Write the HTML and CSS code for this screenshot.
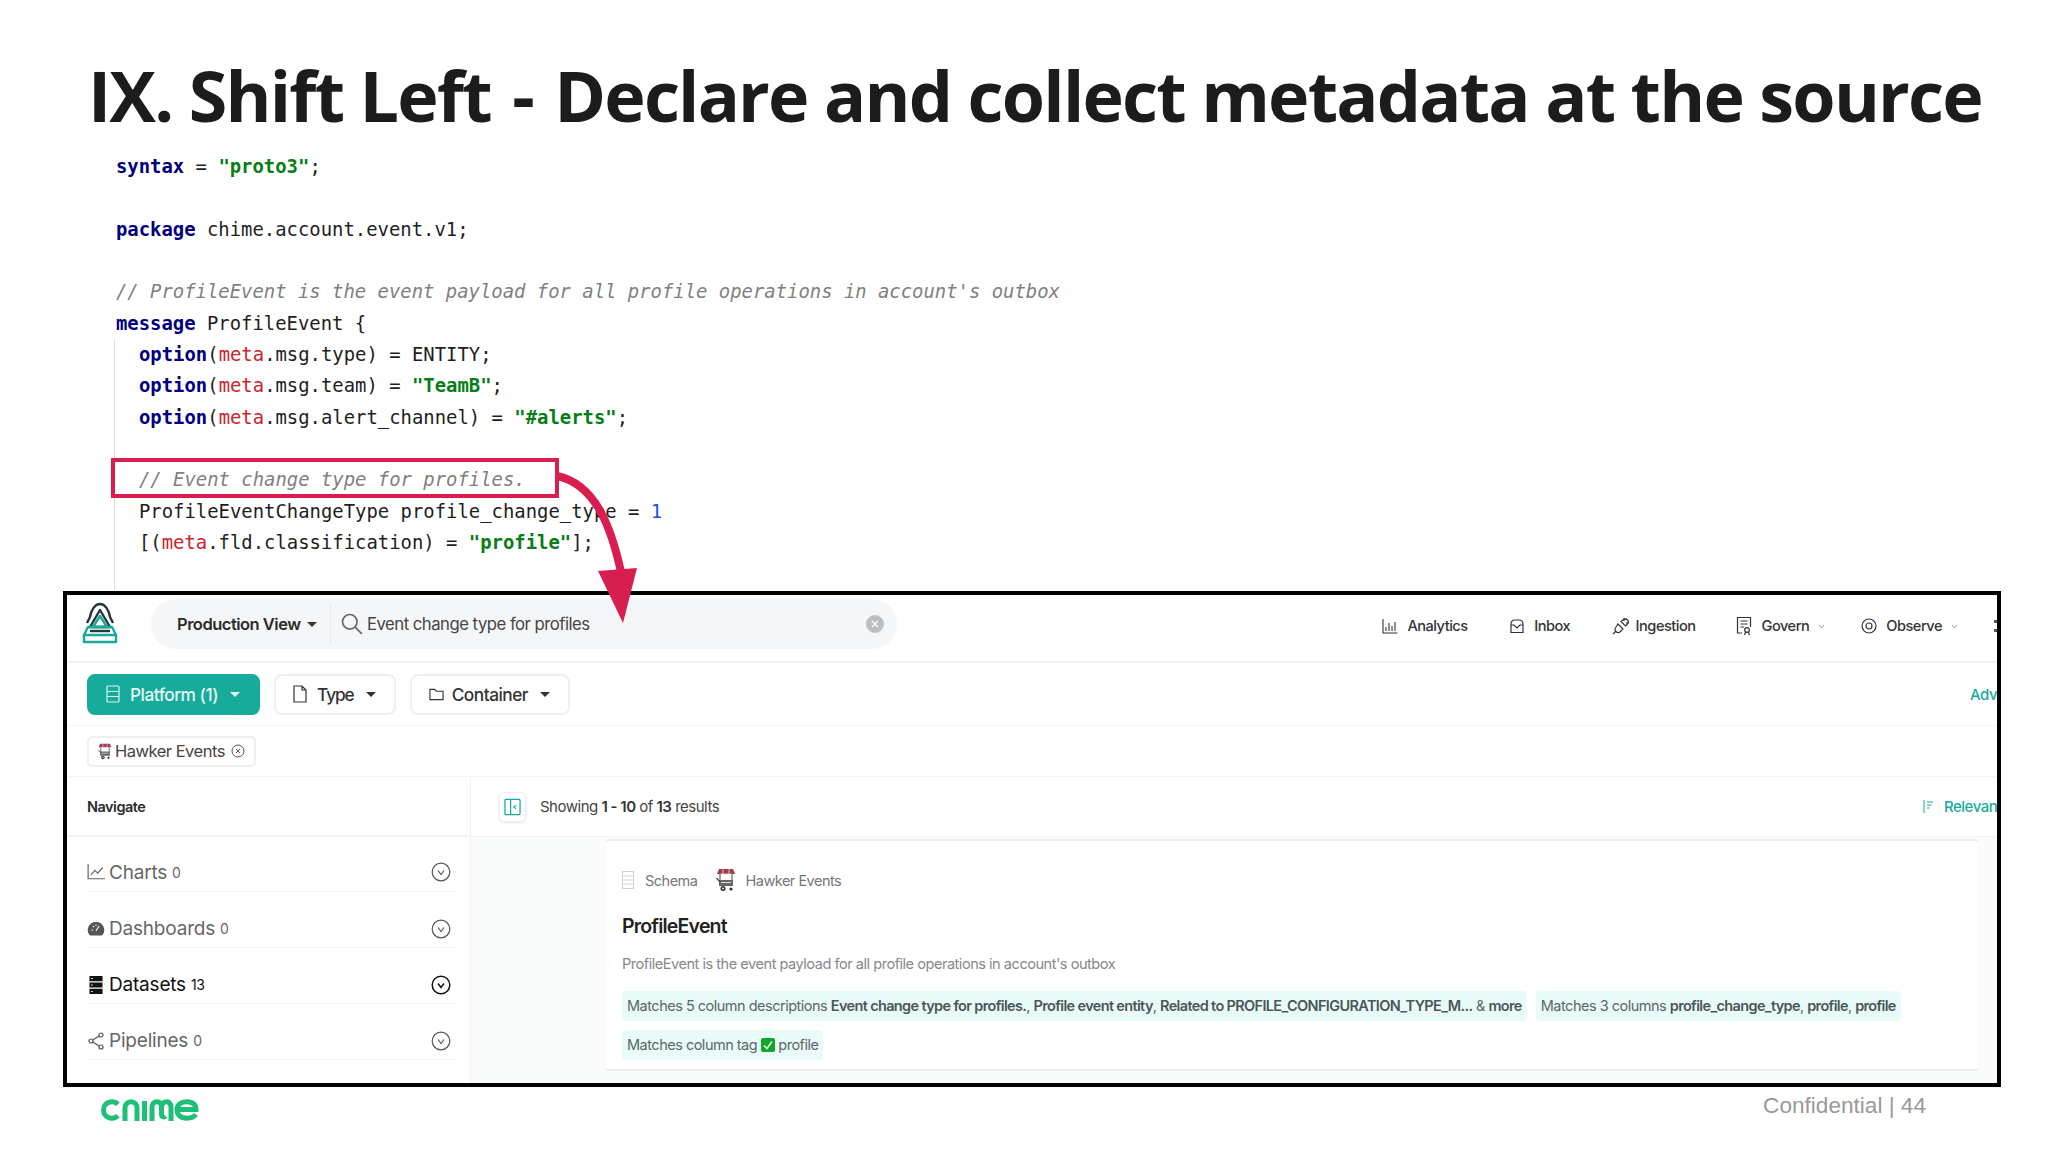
FILE: index.html
```html
<!DOCTYPE html>
<html lang="en">
<head>
<meta charset="utf-8">
<title>Shift Left</title>
<link rel="stylesheet" href="styles.css">
</head>
<body>
<div class="slide">
  <h1 class="title">IX. Shift Left <span class="dash">-</span> Declare and collect metadata at the source</h1>
  <div class="code">
    <div class="line"><span class="kw">syntax</span> = <span class="str">"proto3"</span>;</div>
    <div class="line"></div>
    <div class="line"><span class="kw">package</span> chime.account.event.v1;</div>
    <div class="line"></div>
    <div class="line"><span class="com">// ProfileEvent is the event payload for all profile operations in account's outbox</span></div>
    <div class="line"><span class="kw">message</span> ProfileEvent {</div>
    <div class="codebody">
      <div class="line"><span class="kw">option</span>(<span class="meta">meta</span>.msg.type) = ENTITY;</div>
      <div class="line"><span class="kw">option</span>(<span class="meta">meta</span>.msg.team) = <span class="str">"TeamB"</span>;</div>
      <div class="line"><span class="kw">option</span>(<span class="meta">meta</span>.msg.alert_channel) = <span class="str">"#alerts"</span>;</div>
      <div class="line"></div>
      <div class="line"><span class="com">// Event change type for profiles.</span></div>
      <div class="line">ProfileEventChangeType profile_change_type = <span class="num">1</span></div>
      <div class="line">[(<span class="meta">meta</span>.fld.classification) = <span class="str">"profile"</span>];</div>
    </div>
  </div>
  <div class="screen">
    <div class="topbar">
      <svg class="logo" viewBox="0 0 36 42" fill="none" stroke-width="2.4" stroke-linejoin="round">
        <path d="M18 2 C13 2 9 8 8 15 L5 21 M18 2 C23 2 27 8 28 15 L31 21" stroke="#24383c"/>
        <path d="M18 8 L8 25 L28 25 Z" stroke="#24383c"/>
        <path d="M18 14 L11 25 L25 25 Z" stroke="#17a99a"/>
        <path d="M6 25 H30 L34 33 H2 Z M2 33 V40 H34 V33" stroke="#17a99a"/>
        <path d="M8 29 H28" stroke="#24383c"/>
      </svg>
      <div class="searchpill">
        <span class="viewname">Production View</span>
        <span class="caret"></span>
        <span class="pilldiv"></span>
        <svg class="searchic" viewBox="0 0 20 20" fill="none" stroke="#5f6b70" stroke-width="1.5"><circle cx="8" cy="8" r="6.6"/><path d="M12.8 12.8 L19 19"/></svg>
        <span class="query">Event change type for profiles</span>
        <svg class="clear" viewBox="0 0 18 18"><circle cx="9" cy="9" r="9" fill="#b9bfc2"/><path d="M6 6 L12 12 M12 6 L6 12" stroke="#f5f6f7" stroke-width="1.5"/></svg>
      </div>
      <nav class="nav">
        <span class="navitem"><svg class="ni" viewBox="0 0 16 16" fill="none" stroke="#333" stroke-width="1.1"><path d="M1 1 V15 H15.5 M4 13 V9 M7 13 V5 M10 13 V8 M13 13 V4"/></svg>Analytics</span>
        <span class="navitem"><svg class="ni" viewBox="0 0 16 16" fill="none" stroke="#333" stroke-width="1.2"><path d="M2 14.5 V6 C2 3.5 3.5 2 6 2 H10 C12.5 2 14 3.5 14 6 V14.5 Z M2 7 H5 L8 10 L11 7 H14"/></svg>Inbox</span>
        <span class="navitem"><svg class="ni ni-plug" viewBox="0 0 18 18" fill="none" stroke="#333" stroke-width="1.2"><path d="M1 17 L4 14 M12 1 V4 M17 6 H14 M6 7 L11 12 L8.5 14.5 C7 15.8 5 15.6 4 14.5 C2.8 13.4 2.8 11.5 4 10 Z M9 4.5 L13.5 9 L15.5 7 C16.7 5.5 16.5 4 15.5 3 C14.3 1.8 12.5 1.8 11 3 Z"/></svg>Ingestion</span>
        <span class="navitem"><svg class="ni tall" viewBox="0 0 16 20" fill="none" stroke="#333" stroke-width="1.2"><path d="M6 17 H1.5 V1.5 H14.5 V11 M4.5 5 H11.5 M4.5 8 H11.5 M4.5 11 H8"/><circle cx="11" cy="14" r="2.3"/><path d="M9.5 16 L8.5 19 M12.5 16 L13.5 19"/></svg>Govern<svg class="chev" viewBox="0 0 8 6" fill="none" stroke="#999" stroke-width="1"><path d="M1 1 L4 5 L7 1"/></svg></span>
        <span class="navitem"><svg class="ni" viewBox="0 0 16 16" fill="none" stroke="#333" stroke-width="1.2"><circle cx="8" cy="8" r="7"/><circle cx="8" cy="8" r="3"/></svg>Observe<svg class="chev" viewBox="0 0 8 6" fill="none" stroke="#999" stroke-width="1"><path d="M1 1 L4 5 L7 1"/></svg></span>
        <span class="dots"></span>
      </nav>
    </div>
    <div class="filters">
      <span class="fbtn fbtn-on"><svg class="fi" viewBox="0 0 14 18" fill="none" stroke="#d8f3ef" stroke-width="1.2"><rect x="1" y="1" width="12" height="16" rx="1"/><path d="M1 6.5 H13 M1 11.5 H13"/></svg>Platform (1)<span class="caret caret-w"></span></span>
      <span class="fbtn fbtn-type"><svg class="fi" viewBox="0 0 14 18" fill="none" stroke="#333" stroke-width="1.2"><path d="M1 1 H9 L13 5 V17 H1 Z M9 1 V5 H13"/></svg>Type<span class="caret caret-d"></span></span>
      <span class="fbtn"><svg class="fi fi-w" viewBox="0 0 16 14" fill="none" stroke="#333" stroke-width="1.2"><path d="M1 2 H6 L8 4 H15 V13 H1 Z"/></svg>Container<span class="caret caret-d"></span></span>
      <span class="adv">Advanced Filters</span>
    </div>
    <div class="chiprow">
      <span class="chip"><svg class="cart" viewBox="0 0 20 24"><use href="#cartshape"/></svg>Hawker Events<svg class="chipx" viewBox="0 0 14 14" fill="none" stroke="#555" stroke-width="1"><circle cx="7" cy="7" r="6"/><path d="M5 5 L9 9 M9 5 L5 9"/></svg></span>
    </div>
    <div class="main">
      <aside class="side">
        <div class="sidehead">Navigate</div>
        <div class="siderow"><svg class="si" viewBox="0 0 16 14" fill="none" stroke="#666" stroke-width="1.1"><path d="M1 0 V13 H16 M3.5 9.5 L7 5.5 L9.5 8 L14 3"/></svg><span class="sname">Charts</span><span class="scount">0</span><svg class="circ" viewBox="0 0 20 20" fill="none" stroke="#555" stroke-width="1.2"><circle cx="10" cy="10" r="8.8"/><path d="M7 8.5 L10 12.5 L13 8.5"/></svg></div>
        <div class="siderow"><svg class="si" viewBox="0 0 18 18"><path d="M9 2 A8 8 0 0 0 3 15.5 H15 A8 8 0 0 0 9 2 Z" fill="#555"/><path d="M9 11 L12 6 M4.5 10 H6 M6 6 L7 7 M9 4.5 V6" stroke="#fff" stroke-width="1.1"/></svg><span class="sname">Dashboards</span><span class="scount">0</span><svg class="circ" viewBox="0 0 20 20" fill="none" stroke="#555" stroke-width="1.2"><circle cx="10" cy="10" r="8.8"/><path d="M7 8.5 L10 12.5 L13 8.5"/></svg></div>
        <div class="siderow dark"><svg class="si" viewBox="0 0 16 22"><path d="M0 0 H16 V6.5 H0 Z M0 7.8 H16 V14.2 H0 Z M0 15.5 H16 V22 H0 Z" fill="#111"/><path d="M2 3 H4 M2 11 H4 M2 19 H4" stroke="#fff" stroke-width="1.2"/></svg><span class="sname">Datasets</span><span class="scount">13</span><svg class="circ" viewBox="0 0 20 20" fill="none" stroke="#111" stroke-width="1.5"><circle cx="10" cy="10" r="8.8"/><path d="M7 8.5 L10 12.5 L13 8.5"/></svg></div>
        <div class="siderow"><svg class="si" viewBox="0 0 16 18" fill="none" stroke="#555" stroke-width="1.2"><circle cx="3" cy="9" r="2"/><circle cx="13" cy="3" r="2"/><circle cx="13" cy="15" r="2"/><path d="M4.8 8 L11.2 4 M4.8 10 L11.2 14"/></svg><span class="sname">Pipelines</span><span class="scount">0</span><svg class="circ" viewBox="0 0 20 20" fill="none" stroke="#555" stroke-width="1.2"><circle cx="10" cy="10" r="8.8"/><path d="M7 8.5 L10 12.5 L13 8.5"/></svg></div>
      </aside>
      <section class="results">
        <div class="reshead">
          <span class="collapse"><svg viewBox="0 0 18 18" class="collapse-ic" fill="none" stroke="#1aa795" stroke-width="1.3"><rect x="1" y="1" width="16" height="16" rx="1"/><path d="M7 1 V17 M12.5 7 L10.5 9 L12.5 11"/></svg></span>
          <span class="showing">Showing <b>1 - 10</b> of <b>13</b> results</span>
          <svg class="sortic" viewBox="0 0 12 16" fill="none" stroke="#1aa795" stroke-width="1"><path d="M2 1 V14 M5 3 H11 M5 6 H9.5 M5 9 H7.5"/></svg>
          <span class="relev">Relevance</span>
        </div>
        <div class="resbody">
          <article class="card">
            <div class="crumbs">
              <svg class="schemaic" viewBox="0 0 12 18" fill="none" stroke="#cfd3d5" stroke-width="1"><rect x="0.5" y="0.5" width="11" height="17"/><path d="M0.5 5 H11.5 M0.5 9 H11.5 M0.5 13 H11.5"/></svg>
              <span>Schema</span>
              <svg class="cart cart-lg" viewBox="0 0 20 24"><g id="cartshape"><path d="M3 1 H17 L19 6 H1 Z" fill="#a33a4a"/><path d="M4 6 H16 M7 1 V6 M13 1 V6" stroke="#f2d9dd" stroke-width="0.8"/><path d="M4 6 V13 M16 6 V13" stroke="#444" stroke-width="1"/><rect x="3" y="12" width="14" height="6" fill="#666"/><path d="M5 14.5 H15" stroke="#ddd" stroke-width="1"/><path d="M0.5 10 L4 14" stroke="#444" stroke-width="1.2"/><circle cx="7" cy="20.5" r="2.5" fill="#333"/><circle cx="7" cy="20.5" r="0.9" fill="#fff"/><circle cx="15" cy="21" r="1.6" fill="#333"/></g></svg>
              <span>Hawker Events</span>
            </div>
            <h2 class="cardtitle">ProfileEvent</h2>
            <p class="carddesc">ProfileEvent is the event payload for all profile operations in account's outbox</p>
            <div class="matches">
              <span class="match">Matches 5 column descriptions <b>Event change type for profiles.</b>, <b>Profile event entity</b>, <b>Related to PROFILE_CONFIGURATION_TYPE_M...</b> &amp; <b>more</b></span>
              <span class="match">Matches 3 columns <b>profile_change_type</b>, <b>profile</b>, <b>profile</b></span>
              <span class="match">Matches column tag <svg class="check" viewBox="0 0 14 14"><rect width="14" height="14" rx="2" fill="#12a52a"/><path d="M3 7.5 L6 10.5 L11 3.5" fill="none" stroke="#d9f7dd" stroke-width="1.6"/></svg> profile</span>
            </div>
          </article>
        </div>
      </section>
    </div>
  </div>
  <footer class="foot">
    <svg class="brand" viewBox="0 0 98 22" fill="none" stroke="#1fbf7a" stroke-width="5" role="img" aria-label="chime logo">
      <path d="M17 5.2 C15 3.2 12 2.5 9 3 C5 3.8 2.5 7 2.5 11 C2.5 15 5 18.2 9 19 C12 19.5 15 18.8 17 16.8"/>
      <path d="M24 22 V9 C24 5.5 26.5 2.8 30 2.8 C33.5 2.8 36 5.5 36 9 V22"/>
      <path d="M43.5 2 V22"/>
      <path d="M51 22 V8 C51 5 53 2.8 56 2.8 C59 2.8 60.5 5 60.5 8 V15 C60.5 18 62.5 19 64.5 17 M60.5 9 C60.5 5 62.5 2.8 65.5 2.8 C68.5 2.8 70 5 70 8 V22"/>
      <path d="M75.5 10.5 H95 C95 6 92 2.8 86 2.8 C80 2.8 76 6 76 11 C76 16 80 19.2 86 19.2 C90 19.2 93 18 95 15.5"/>
    </svg>
    <span class="conf">Confidential | 44</span>
  </footer>
  <svg class="callout" viewBox="0 0 560 180" fill="none">
    <rect x="2" y="2" width="444" height="36" stroke="#d81e4f" stroke-width="4"/>
    <path d="M446 18 C484 26 500 68 510 114" stroke="#d81e4f" stroke-width="8"/>
    <path d="M487 113 L526 110 L512 165 Z" fill="#d81e4f"/>
  </svg>
</div>
</body>
</html>
```
FILE: styles.css
```css
* { box-sizing: border-box; }
html, body { margin: 0; padding: 0; background: #fff; }
.slide {
  position: relative;
  width: 2048px;
  height: 1152px;
  overflow: hidden;
  display: flex;
  flex-direction: column;
  background: #fff;
}
.title {
  margin: 50px 0 0 88px;
  font: 700 70px/90px "Open Sans", sans-serif;
  color: #1c1c1c;
  white-space: nowrap;
  letter-spacing: -1.8px;
}
.dash { margin: 0 5px; }
.code {
  margin: 11px 0 0 116px;
  height: 440px;
  display: flex;
  flex-direction: column;
  font: 400 18.9px/31.35px "DejaVu Sans Mono", monospace;
  color: #1e1e1e;
}
.line { height: 31.35px; white-space: pre; flex: none; }
.codebody {
  flex: 1;
  margin-left: -2px;
  padding-left: 24px;
  border-left: 1px solid #dcdcdc;
}
.kw { color: #000080; font-weight: 700; }
.str { color: #067d17; font-weight: 700; }
.com { color: #808080; font-style: italic; }
.meta { color: #c9252b; }
.num { color: #1750eb; }

.screen {
  width: 1938px;
  height: 496px;
  margin-left: 63px;
  border: 4px solid #000;
  display: flex;
  flex-direction: column;
  overflow: hidden;
  background: #fff;
  font-family: Inter, "Noto Sans", sans-serif;
  letter-spacing: -0.5px;
  color: #333;
}
.topbar {
  height: 68px;
  flex: none;
  display: flex;
  align-items: flex-start;
  padding: 7px 0 0 15px;
  border-bottom: 2px solid #f0f1f2;
}
.logo { width: 36px; height: 42px; flex: none; }
.searchpill {
  width: 746px;
  height: 50px;
  margin: -3px 0 0 33px;
  border-radius: 25px;
  background: #f5f6f7;
  display: flex;
  align-items: center;
  padding-left: 26px;
  flex: none;
}
.viewname { font-size: 16.5px; font-weight: 600; color: #2b2b2b; width: 122px; white-space: nowrap; }
.caret {
  width: 0;
  height: 0;
  border-left: 5px solid transparent;
  border-right: 5px solid transparent;
  border-top: 5px solid #333;
  margin-left: 8px;
  flex: none;
}
.caret-w { border-top-color: #e8f8f5; margin-left: 12px; }
.caret-d { margin-left: 12px; }
.pilldiv { width: 1px; height: 40px; background: #e6e8e9; margin: 0 10px 0 13px; flex: none; }
.searchic { width: 22px; height: 22px; flex: none; }
.query { margin-left: 4px; font-size: 16.7px; color: #444; white-space: nowrap; flex: 1; }
.clear { width: 18px; height: 18px; margin-right: 13px; flex: none; }
.nav {
  margin-left: auto;
  display: flex;
  align-items: center;
  height: 54px;
  font-size: 14.6px;
  font-weight: 500;
  color: #333;
  white-space: nowrap;
  margin-top: -3px;
}
.navitem { display: flex; align-items: center; margin-right: 40px; }
.navitem:nth-child(1), .navitem:nth-child(2) { margin-right: 41.5px; }
.ni { width: 16px; height: 16px; margin-right: 9px; flex: none; }
.ni-plug { width: 18px; height: 18px; margin-right: 6px; }
.ni.tall { height: 20px; margin-right: 10px; }
.chev { width: 7px; height: 5px; margin-left: 9px; }
.navitem:nth-child(4), .navitem:nth-child(5) { margin-right: 36px; }
.dots { width: 3px; height: 12px; flex: none; border-top: 3px solid #555; border-bottom: 3px solid #555; }

.filters {
  height: 63px;
  flex: none;
  display: flex;
  align-items: center;
  gap: 14px;
  padding-left: 20px;
  border-bottom: 1px solid #f2f3f4;
}
.fbtn {
  height: 41px;
  padding: 0 18px 0 17px;
  border: 2px solid #eeeff0;
  border-radius: 8px;
  display: flex;
  align-items: center;
  font-size: 17.3px;
  font-weight: 500;
  color: #333;
  white-space: nowrap;
}
.fbtn-on { background: #17ab9b; border-color: #17ab9b; color: #e6f7f4; }
.fbtn-type { letter-spacing: -1.1px; }
.fi { width: 14px; height: 18px; margin-right: 10px; flex: none; }
.fi-w { width: 15px; height: 14px; margin-right: 8px; }
.adv { margin-left: auto; width: 27px; overflow: hidden; white-space: nowrap; color: #17ab9b; font-size: 15px; font-weight: 500; }

.chiprow {
  height: 51px;
  flex: none;
  display: flex;
  align-items: center;
  padding-left: 20px;
  border-bottom: 1px solid #f2f3f4;
}
.chip {
  height: 31px;
  width: 169px;
  padding-left: 9px;
  border: 2px solid #eeeff0;
  border-radius: 5px;
  display: flex;
  align-items: center;
  font-size: 16.5px;
  color: #444;
  white-space: nowrap;
}
.cart { width: 14px; height: 17px; margin-right: 3px; flex: none; }
.chipx { width: 14px; height: 14px; margin-left: 6px; flex: none; }

.main { flex: 1; display: flex; min-height: 0; }
.side { width: 404px; flex: none; border-right: 1px solid #eff1f2; }
.sidehead {
  height: 60px;
  display: flex;
  align-items: center;
  padding-left: 20px;
  font-size: 14.5px;
  font-weight: 600;
  color: #2b2b2b;
  border-bottom: 2px solid #f2f3f4;
}
.siderow {
  height: 56px;
  margin: 0 15px 0 20px;
  padding-top: 18px;
  display: flex;
  align-items: center;
  color: #666;
  border-bottom: 1px solid #f3f4f5;
}
.sidehead + .siderow { height: 55px; padding-top: 16px; }
.si { width: 18px; height: 18px; margin-right: 4px; flex: none; }
.sname { font-size: 19px; letter-spacing: -0.2px; }
.scount { font-size: 14px; margin-left: 5px; }
.circ { width: 20px; height: 20px; margin-left: auto; margin-right: 4px; flex: none; }
.dark { color: #111; }

.results { flex: 1; display: flex; flex-direction: column; min-width: 0; }
.reshead {
  height: 60px;
  flex: none;
  display: flex;
  align-items: center;
  padding-left: 28px;
  border-bottom: 1px solid #f2f3f4;
}
.collapse {
  width: 27px;
  height: 30px;
  border: 1px solid #eceeef;
  border-radius: 5px;
  box-shadow: 0 1px 3px #e6e8e9;
  display: flex;
  align-items: center;
  justify-content: center;
  flex: none;
}
.collapse-ic { width: 17px; height: 20px; }
.showing { margin-left: 14px; font-size: 15px; color: #444; white-space: nowrap; }
.showing b { font-weight: 600; color: #333; }
.sortic { width: 12px; height: 16px; margin-left: auto; flex: none; }
.relev { margin-left: 10px; width: 53px; overflow: hidden; white-space: nowrap; color: #17ab9b; font-size: 15px; font-weight: 500; }

.resbody { flex: 1; background: #fafbfb; padding: 0 19px 0 135px; min-height: 0; }
.card {
  height: 232px;
  margin-top: 2px;
  background: #fff;
  border-top: 2px solid #ececec;
  border-bottom: 2px solid #e9ebec;
  border-radius: 3px;
  padding: 27px 0 0 16px;
}
.crumbs { display: flex; align-items: center; height: 24px; font-size: 14.5px; color: #777; white-space: nowrap; }
.schemaic { width: 12px; height: 18px; margin-right: 11px; flex: none; }
.cart-lg { width: 20px; height: 24px; margin: 0 9px 0 19px; flex: none; }
.cardtitle { margin: 20px 0 0; font-size: 19.5px; line-height: 28px; font-weight: 600; letter-spacing: -0.8px; color: #222; }
.carddesc { margin: 13px 0 0; font-size: 14.6px; line-height: 22px; color: #888; white-space: nowrap; }
.matches { margin: 16px 0 0; display: flex; flex-wrap: wrap; gap: 9px 9px; }
.match {
  height: 30px;
  line-height: 30px;
  padding: 0 5px;
  white-space: pre;
  background: #e9fbf8;
  border-radius: 4px;
  font-size: 14.5px;
  color: #59686a;
}
.match b { font-weight: 600; color: #4a5658; letter-spacing: -0.65px; }
.check { width: 14px; height: 14px; vertical-align: -2px; }

.foot {
  flex: 1;
  display: flex;
  align-items: flex-start;
  padding: 12px 0 0 101px;
}
.brand { width: 98px; height: 22px; flex: none; }
.conf {
  margin-left: auto;
  margin-right: 122px;
  margin-top: -8px;
  font: 400 22.6px/30px "Liberation Sans", Arial, sans-serif;
  color: #999;
}
.callout {
  position: absolute;
  left: 111px;
  top: 458px;
  width: 560px;
  height: 180px;
}
```
